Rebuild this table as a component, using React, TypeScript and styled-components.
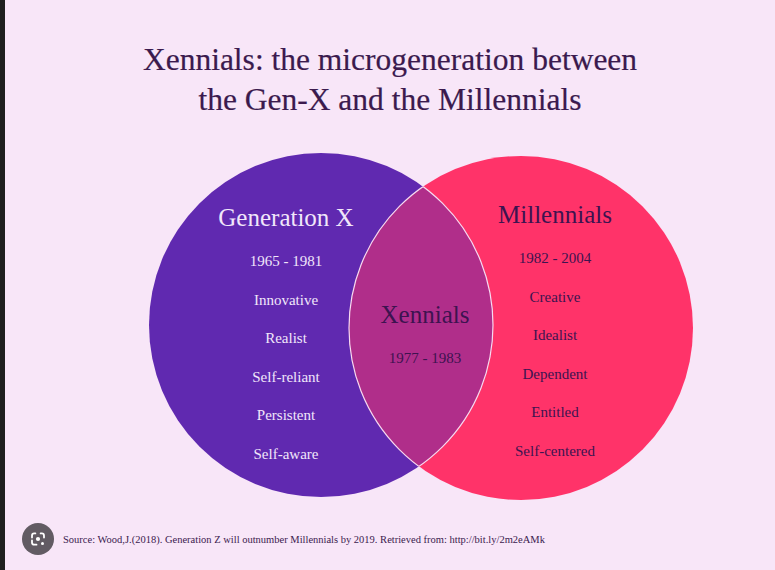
import React from 'react';
import styled, {createGlobalStyle} from 'styled-components';

type Group = {
  heading: string;
  items: string[];
  x: number;
  y: number;
  tone: 'light' | 'dark';
};

const groups: Group[] = [
  {
    heading: 'Generation X',
    items: ['1965 - 1981', 'Innovative', 'Realist', 'Self-reliant', 'Persistent', 'Self-aware'],
    x: 281,
    y: 50,
    tone: 'light',
  },
  {
    heading: 'Millennials',
    items: ['1982 - 2004', 'Creative', 'Idealist', 'Dependent', 'Entitled', 'Self-centered'],
    x: 550,
    y: 47,
    tone: 'dark',
  },
  {
    heading: 'Xennials',
    items: ['1977 - 1983'],
    x: 420,
    y: 147,
    tone: 'dark',
  },
];

export default function App(): JSX.Element {
  return (
    <>
      <GlobalStyle />
      <Page>
        <Strip />
        <Content>
          <Title>
            Xennials: the microgeneration between
            <br />
            the Gen-X and the Millennials
          </Title>
          <Diagram>
            <VennDrawing />
            {groups.map((g) => (
              <LabelGroup key={g.heading} $x={g.x} $y={g.y} $tone={g.tone}>
                <Heading>{g.heading}</Heading>
                {g.items.map((item) => (
                  <Item key={item}>{item}</Item>
                ))}
              </LabelGroup>
            ))}
          </Diagram>
          <Footer>
            <LensButton>
              <LensIcon />
            </LensButton>
            <Source>
              Source: Wood,J.(2018). Generation Z will outnumber Millennials by 2019. Retrieved from: http://bit.ly/2m2eAMk
            </Source>
          </Footer>
        </Content>
      </Page>
    </>
  );
}

function VennDrawing(): JSX.Element {
  return (
    <Svg width="770" height="350" viewBox="0 0 770 350">
      <defs>
        <clipPath id="leftClip">
          <circle cx="316" cy="173" r="172" />
        </clipPath>
        <clipPath id="rightClip">
          <circle cx="516" cy="176" r="172" />
        </clipPath>
      </defs>
      <circle cx="316" cy="173" r="172" fill="#6029b0" />
      <circle cx="516" cy="176" r="172" fill="#ff3369" />
      <g clipPath="url(#leftClip)">
        <circle cx="516" cy="176" r="172" fill="#b02e8a" />
        <circle cx="516" cy="176" r="172" fill="none" stroke="#f6d9f0" strokeWidth="1.2" />
      </g>
      <g clipPath="url(#rightClip)">
        <circle cx="316" cy="173" r="172" fill="none" stroke="#f6d9f0" strokeWidth="1.2" />
      </g>
    </Svg>
  );
}

function LensIcon(): JSX.Element {
  return (
    <svg width="18" height="18" viewBox="0 0 24 24" fill="none">
      <path d="M4 10V7.5A3 3 0 0 1 7 4.5h1.5" stroke="#fff" strokeWidth="2.4" strokeLinecap="round" />
      <path d="M15.5 4.5H17a3 3 0 0 1 3 3V10" stroke="#fff" strokeWidth="2.4" strokeLinecap="round" />
      <path d="M4 14v2.5a3 3 0 0 0 3 3h3" stroke="#fff" strokeWidth="2.4" strokeLinecap="round" />
      <circle cx="12" cy="12" r="2.8" fill="#fff" />
      <circle cx="18" cy="18" r="2" fill="#fff" />
    </svg>
  );
}

const GlobalStyle = createGlobalStyle`
  html, body {
    margin: 0;
    padding: 0;
    background: #f8e6f8;
  }
`;

const Page = styled.div`
  display: flex;
  width: 775px;
  height: 570px;
  background: #f8e6f8;
  overflow: hidden;
  font-family: "Liberation Serif", "DejaVu Serif", serif;
`;

const Strip = styled.div`
  flex: 0 0 5px;
  background: #1f1f1f;
`;

const Content = styled.main`
  flex: 1;
  display: flex;
  flex-direction: column;
  align-items: center;
`;

const Title = styled.h1`
  margin: 40px 0 0;
  font-size: 31.5px;
  font-weight: 400;
  line-height: 40px;
  text-align: center;
  color: #3b1a4e;
  -webkit-text-stroke: 0.2px #3b1a4e;
`;

const Diagram = styled.div`
  position: relative;
  width: 770px;
  height: 350px;
  margin-top: 32px;
`;

const Svg = styled.svg`
  display: block;
  position: absolute;
  left: 0;
  top: 0;
`;

const LabelGroup = styled.div<{$x: number; $y: number; $tone: 'light' | 'dark'}>`
  position: absolute;
  left: ${({$x}) => $x}px;
  top: ${({$y}) => $y}px;
  transform: translateX(-50%);
  display: flex;
  flex-direction: column;
  align-items: center;
  white-space: nowrap;
  color: ${({$tone}) => ($tone === 'light' ? '#f1e6fa' : '#3d1350')};
`;

const Heading = styled.h2`
  margin: 0 0 9px;
  font-size: 25px;
  font-weight: 400;
  line-height: 31px;
`;

const Item = styled.span`
  font-size: 15px;
  line-height: 38.5px;
`;

const Footer = styled.footer`
  align-self: stretch;
  display: flex;
  align-items: center;
  gap: 9px;
  margin-top: 21px;
  padding-left: 17px;
`;

const LensButton = styled.div`
  display: flex;
  align-items: center;
  justify-content: center;
  width: 32px;
  height: 32px;
  border-radius: 50%;
  background: #625b63;
`;

const Source = styled.span`
  font-size: 10.5px;
  color: #3b1a4e;
`;
